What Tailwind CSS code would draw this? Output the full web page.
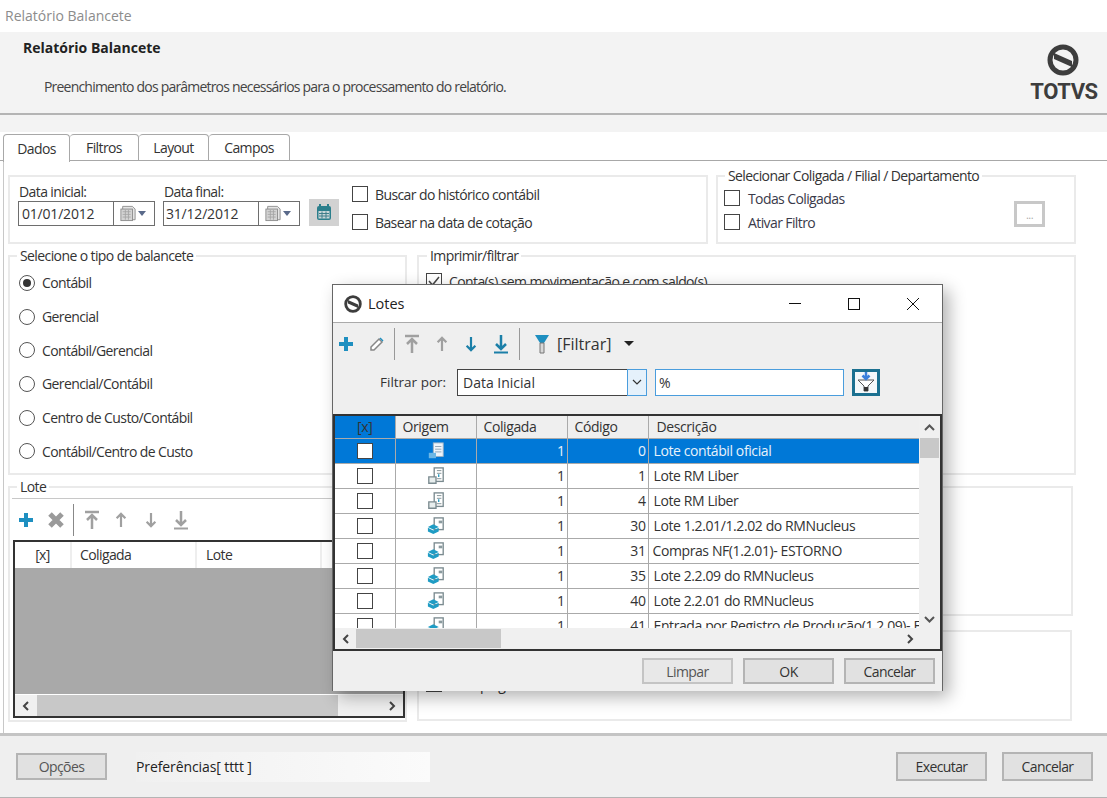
<!DOCTYPE html>
<html lang="pt-BR">
<head>
  <meta charset="UTF-8" />
  <title>Relatório Balancete</title>
  <script src="https://cdn.jsdelivr.net/npm/@tailwindcss/browser@4"></script>
</head>
<body class="relative w-[1107px] h-[798px] overflow-hidden bg-white text-[14px] text-[#333] font-['Open_Sans','Liberation_Sans',sans-serif] tracking-[-0.6px]">

  <!-- icones reutilizados -->
  <svg class="hidden">
    <symbol id="plus" viewBox="0 0 16 16"><path d="M8 1v14M1 8h14" fill="none" stroke="currentColor" stroke-width="4"/></symbol>
    <symbol id="top" viewBox="0 0 16 20"><path d="M1 2h14" stroke="currentColor" stroke-width="2.5"/><path d="M8 19V7M3 10l5-5 5 5" fill="none" stroke="currentColor" stroke-width="2.5"/></symbol>
    <symbol id="up" viewBox="0 0 16 20"><path d="M8 18V4M3 8l5-5 5 5" fill="none" stroke="currentColor" stroke-width="2.5"/></symbol>
    <symbol id="down" viewBox="0 0 16 20"><path d="M8 2v14M3 12l5 5 5-5" fill="none" stroke="currentColor" stroke-width="2.5"/></symbol>
    <symbol id="bottom" viewBox="0 0 16 20"><path d="M1 18.500h14" stroke="currentColor" stroke-width="2"/><path d="M8 1v13M3 10l5 5 5-5" fill="none" stroke="currentColor" stroke-width="2.500"/></symbol>
    <symbol id="logo" viewBox="0 0 32 32"><circle cx="16" cy="16" r="13" fill="none" stroke="currentColor" stroke-width="5"/><path d="M7 9 L25 17 L25 23 L7 15Z" fill="currentColor"/></symbol>
    <symbol id="cal" viewBox="0 0 18 18"><path d="M3 1h11l3 3v12H3z" fill="#e4e4e4" stroke="#8a8a8a"/><rect x="1" y="4" width="13" height="13" fill="#d4d4d4" stroke="#8a8a8a"/><path d="M3 7h9M3 10h9M3 13h9M6 5v11M9.500 5v11" stroke="#a5a5a5"/></symbol>
    <symbol id="doc" viewBox="0 0 20 20"><rect x="8" y="1" width="10" height="15" fill="#fff" stroke="#7b8b90" stroke-width="1.500"/><path d="M2 11h8v7H2z" fill="#e8eeee" stroke="#7b8b90" stroke-width="1.500"/><path d="M11 4h5M11 7h5M11 13h5" stroke="#7b8b90"/><path d="M13 8v3" stroke="#2a9ac0" stroke-width="1.500"/></symbol>
    <symbol id="box" viewBox="0 0 20 20"><rect x="8" y="1" width="10" height="13" fill="#fff" stroke="#7b8b90" stroke-width="1.500"/><path d="M13 4h4v3h-4z" fill="#8a9a9e"/><path d="M1 11l6-3 6 3-6 3z" fill="#1f9cc4"/><path d="M1 12v4l6 3 6-3v-4l-6 3z" fill="#1f9cc4"/></symbol>
  </svg>

  <!-- barra de titulo -->
  <div class="h-8 flex items-center pl-[5px] pb-[1px] text-[#8c8c8c] tracking-normal">Relatório Balancete</div>

  <!-- cabecalho -->
  <header class="h-[100px] bg-[#f3f3f3] relative">
    <div class="h-[83px] border-b-2 border-[#b4b4b4] flex justify-between">
      <div class="pl-[23px] pt-[7px]">
        <p class="font-bold text-[#222] leading-[18px] tracking-normal">Relatório Balancete</p>
        <p class="pl-[21px] pt-[21px] leading-[18px] text-[#444] tracking-[-0.8px]">Preenchimento dos parâmetros necessários para o processamento do relatório.</p>
      </div>
      <div class="w-[66px] mr-[10px] pt-[12px] flex flex-col items-center">
        <svg class="w-8 h-8 -ml-[3px] text-[#3d3d3d]"><use href="#logo"/></svg>
        <span class="mt-[3px] text-[22px] leading-[26px] font-bold text-[#3d3d3d] font-['Roboto',sans-serif] tracking-[-0.4px]">TOTVS</span>
      </div>
    </div>
  </header>

  <!-- abas -->
  <nav class="h-[29px] pt-[2px] pl-[3px] flex border-b border-[#a8a8a8]">
    <a class="w-[67px] h-[28px] -mb-px bg-white border border-b-0 border-[#a8a8a8] rounded-t flex items-center justify-center">Dados</a>
    <a class="w-[69px] h-[27px] border border-l-0 border-[#a8a8a8] rounded-t flex items-center justify-center">Filtros</a>
    <a class="w-[70px] h-[27px] border border-l-0 border-[#a8a8a8] rounded-t flex items-center justify-center">Layout</a>
    <a class="w-[81px] h-[27px] border border-l-0 border-[#a8a8a8] rounded-t flex items-center justify-center">Campos</a>
  </nav>

  <!-- conteudo da aba Dados -->
  <main class="h-[572px] ml-[3px] pl-[4px] pt-[14px] border-l border-[#c8c8c8] flex flex-col gap-[11px]">
    <div class="flex gap-2">
      <section class="w-[700px] h-[69px] border-2 border-[#eaeaea] pl-[8px] flex">
        <div class="w-[145px] pt-[6px]">
          <label class="block pl-px leading-[18px]">Data inicial:</label>
          <div class="w-[137px] h-[25px] border border-[#6e6e6e] flex items-center tracking-[-0.2px]">
            <span class="w-[94px] pl-[3px]">01/01/2012</span>
            <span class="h-full flex-1 border-l border-[#6e6e6e] pr-[3px] flex items-center justify-center gap-[2px]"><svg class="w-[16px] h-[17px]"><use href="#cal"/></svg><span class="border-x-[4px] border-t-[5px] border-x-transparent border-t-[#5a6a8a]"></span></span>
          </div>
        </div>
        <div class="w-[146px] pt-[6px]">
          <label class="block pl-px leading-[18px]">Data final:</label>
          <div class="w-[137px] h-[25px] border border-[#6e6e6e] flex items-center tracking-[-0.2px]">
            <span class="w-[94px] pl-[2px]">31/12/2012</span>
            <span class="h-full flex-1 border-l border-[#6e6e6e] pr-[3px] flex items-center justify-center gap-[2px]"><svg class="w-[16px] h-[17px]"><use href="#cal"/></svg><span class="border-x-[4px] border-t-[5px] border-x-transparent border-t-[#5a6a8a]"></span></span>
          </div>
        </div>
        <button class="w-[30px] h-[27px] mt-[22px] bg-[#d2d2d2] flex items-center justify-center">
          <svg class="w-[16px] h-[17px]" viewBox="0 0 16 17"><rect x="1" y="2" width="14" height="14" rx="2" fill="#2b7f8c"/><rect x="2.500" y="7" width="11" height="7.500" fill="#c9d6d8"/><path d="M4 0v3M12 0v3" stroke="#2b7f8c" stroke-width="2"/><path d="M3 9.500h10M3 12h10M6 7.500v7M10 7.500v7" stroke="#3f7f8a"/></svg>
        </button>
        <div class="pl-[13px] pt-[9px] flex flex-col gap-[12px]">
          <label class="flex items-center gap-[7px] h-[16px]"><span class="w-4 h-4 border border-[#444]"></span>Buscar do histórico contábil</label>
          <label class="flex items-center gap-[7px] h-[16px]"><span class="w-4 h-4 border border-[#444]"></span>Basear na data de cotação</label>
        </div>
      </section>

      <section class="relative w-[360px] h-[69px] border-2 border-[#eaeaea] pl-[6px] pt-[13px]">
        <span class="absolute -top-[10px] left-[7px] px-[3px] bg-white leading-[18px]">Selecionar Coligada / Filial / Departamento</span>
        <div class="flex flex-col gap-[8px]">
          <label class="flex items-center gap-[8px] h-[16px] text-[#3a3a4a]"><span class="w-4 h-4 border border-[#444]"></span>Todas Coligadas</label>
          <label class="flex items-center gap-[8px] h-[16px] text-[#3a3a4a]"><span class="w-4 h-4 border border-[#444]"></span>Ativar Filtro</label>
        </div>
        <button class="absolute left-[296px] top-[24px] w-[31px] h-[26px] border-[3px] border-[#c8c8c8] text-[#aaa] text-[11px] leading-none">...</button>
      </section>
    </div>

    <div class="flex gap-[10px]">
      <section class="relative w-[399px] h-[220px] border-2 border-[#eaeaea] pl-[9px] pt-[9px]">
        <span class="absolute -top-[10px] left-[7px] px-[3px] bg-white leading-[18px]">Selecione o tipo de balancete</span>
        <label class="flex items-center gap-[7px] h-[33.700px]"><span class="w-4 h-4 rounded-full border border-[#555] flex items-center justify-center"><span class="w-2 h-2 rounded-full bg-[#333]"></span></span>Contábil</label>
        <label class="flex items-center gap-[7px] h-[33.700px]"><span class="w-4 h-4 rounded-full border border-[#555]"></span>Gerencial</label>
        <label class="flex items-center gap-[7px] h-[33.700px]"><span class="w-4 h-4 rounded-full border border-[#555]"></span>Contábil/Gerencial</label>
        <label class="flex items-center gap-[7px] h-[33.700px]"><span class="w-4 h-4 rounded-full border border-[#555]"></span>Gerencial/Contábil</label>
        <label class="flex items-center gap-[7px] h-[33.700px]"><span class="w-4 h-4 rounded-full border border-[#555]"></span>Centro de Custo/Contábil</label>
        <label class="flex items-center gap-[7px] h-[33.700px]"><span class="w-4 h-4 rounded-full border border-[#555]"></span>Contábil/Centro de Custo</label>
      </section>
      <section class="relative w-[659px] h-[220px] border-2 border-[#eaeaea] pl-[7px] pt-[16px]">
        <span class="absolute -top-[10px] left-[8px] px-[3px] bg-white leading-[18px]">Imprimir/filtrar</span>
        <label class="flex items-center gap-[7px] h-[16px]">
          <span class="w-4 h-4 border border-[#444] flex items-center justify-center"><svg class="w-3 h-3" viewBox="0 0 12 12"><path d="M1 6l3.500 4L11 2" fill="none" stroke="#444" stroke-width="1.500"/></svg></span>
          Conta(s) sem movimentação e com saldo(s)
        </label>
      </section>
    </div>

    <div class="flex gap-[10px]">
      <section class="relative w-[399px] h-[236px] border-2 border-[#eaeaea] pl-[3px]">
        <span class="absolute -top-[10px] left-[7px] px-[3px] bg-white leading-[18px]">Lote</span>
        <div class="h-[42px] mt-[10px] border-t border-[#c8c8c8] -ml-[1px] mr-[1px] pl-[6px] flex items-center gap-[14px]">
          <svg class="w-4 h-4 text-[#1e8fc0]"><use href="#plus"/></svg>
          <svg class="w-4 h-4" viewBox="0 0 16 16"><path d="M2 2l12 12M14 2L2 14" stroke="#9a9a9a" stroke-width="5"/></svg>
          <span class="h-[32px] border-l border-[#888] -ml-[5px] -mr-[4px]"></span>
          <svg class="w-[16px] h-[20px] text-[#a0a0a0]"><use href="#top"/></svg>
          <svg class="w-[14px] h-[18px] text-[#a0a0a0]"><use href="#up"/></svg>
          <svg class="ml-[2px] w-[14px] h-[18px] text-[#a0a0a0]"><use href="#down"/></svg>
          <svg class="ml-[1px] w-[16px] h-[20px] text-[#a0a0a0]"><use href="#bottom"/></svg>
        </div>
        <div class="w-[392px] h-[178px] border-2 border-[#333] flex flex-col">
          <div class="h-[26px] flex items-center bg-white">
            <span class="w-[57px] text-center border-r-2 border-[#eee] leading-[26px]">[x]</span>
            <span class="w-[125px] pl-2 border-r-2 border-[#eee] leading-[26px]">Coligada</span>
            <span class="w-[125px] pl-[9px] border-r-2 border-[#eee] leading-[26px]">Lote</span>
          </div>
          <div class="flex-1 bg-[#a9a9a9]"></div>
          <div class="h-[22px] border-t border-white bg-[#f0f0f0] flex items-center justify-between px-[6px] relative">
            <svg class="w-[10px] h-[10px]" viewBox="0 0 10 10"><path d="M7 1L3 5l4 4" fill="none" stroke="#444" stroke-width="2"/></svg>
            <span class="absolute left-[22px] top-0 w-[301px] h-full bg-[#c8c8c8]"></span>
            <svg class="w-[10px] h-[10px]" viewBox="0 0 10 10"><path d="M3 1l4 4-4 4" fill="none" stroke="#444" stroke-width="2"/></svg>
          </div>
        </div>
      </section>
      <div class="flex flex-col gap-[14px]">
        <section class="w-[656px] h-[130px] border-2 border-[#eaeaea]"></section>
        <section class="w-[655px] h-[91px] border-2 border-[#eaeaea] pl-[7px] pt-[44px]">
          <label class="flex items-center gap-[7px] h-[16px]"><span class="w-4 h-4 border border-[#444]"></span>Rodapé geral</label>
        </section>
      </div>
    </div>
  </main>

  <!-- rodape -->
  <footer class="h-[65px] border-t-[3px] border-[#c4c4c4] bg-[#efefef] border-b border-b-[#b4b4b4] flex items-center pl-[16px] pr-[14px]">
    <button class="w-[91px] h-[27px] bg-[#e1e1e1] border-2 border-[#b4b4b4] text-[#555]">Opções</button>
    <div class="ml-[29px] w-[294px] h-[30px] flex items-center bg-linear-to-r from-[#f0f0f0] to-[#fbfbfb] text-[#222] tracking-[-0.1px]">Preferências[ tttt ]</div>
    <button class="ml-auto w-[91px] h-[29px] bg-[#e1e1e1] border-2 border-[#b4b4b4]">Executar</button>
    <button class="ml-[15px] w-[91px] h-[29px] bg-[#e1e1e1] border-2 border-[#b4b4b4]">Cancelar</button>
  </footer>

  <!-- janela Lotes -->
  <div class="absolute left-[332px] top-[284px] w-[611px] h-[407px] bg-[#efefef] border border-[#666] border-b-0 shadow-[6px_6px_16px_rgba(0,0,0,0.3)] flex flex-col">
    <div class="h-[38px] shrink-0 bg-white border-b border-[#aaa] flex items-center pl-[11px] text-[#222]">
      <svg class="w-[18px] h-[18px] text-[#3d3d3d] mr-[6px]"><use href="#logo"/></svg>
      <span class="text-[14.500px] tracking-normal">Lotes</span>
      <span class="ml-auto w-[59px] flex justify-center"><span class="w-3 border-t border-[#111]"></span></span>
      <span class="w-[59px] flex justify-center"><span class="w-3 h-3 border border-[#111]"></span></span>
      <span class="w-[59px] flex justify-center"><svg class="w-3 h-3" viewBox="0 0 12 12"><path d="M0 0l12 12M12 0L0 12" stroke="#111"/></svg></span>
    </div>

    <div class="h-[37px] shrink-0 pl-[5px] pt-[4px] flex items-center gap-[15px]">
      <svg class="w-4 h-4 text-[#1e8fc0]"><use href="#plus"/></svg>
      <svg class="w-4 h-4" viewBox="0 0 16 16"><path d="M2 11L10 3l3 3-8 8H2z" fill="#fff" stroke="#888" stroke-width="1.500"/><path d="M10.500 2.500l1-1 3 3-1 1z" fill="#1e8fc0"/></svg>
      <span class="h-[32px] border-l border-[#999] -mx-[6px]"></span>
      <svg class="w-[16px] h-[20px] text-[#a0a0a0]"><use href="#top"/></svg>
      <svg class="w-[14px] h-[18px] text-[#a0a0a0]"><use href="#up"/></svg>
      <svg class="w-[14px] h-[18px] text-[#1b7fa8]"><use href="#down"/></svg>
      <svg class="w-[16px] h-[20px] text-[#1b7fa8]"><use href="#bottom"/></svg>
      <span class="h-[32px] border-l border-[#999] -ml-[5px] -mr-[3px]"></span>
      <svg class="w-[16px] h-[20px] ml-[2px]" viewBox="0 0 16 20"><path d="M1 1h14L10 9v10H6V9z" fill="#1e8fc0"/><path d="M6 9h4v10H6z" fill="#d8d8d8" stroke="#777"/></svg>
      <span class="-ml-[8px] text-[16px] tracking-normal text-[#333]">[Filtrar]</span>
      <span class="-ml-[2px] border-x-[5px] border-t-[5px] border-x-transparent border-t-[#222]"></span>
    </div>

    <div class="h-[26px] mt-[9px] shrink-0 flex items-center">
      <span class="ml-[47px] w-[77px] tracking-normal text-[13.500px]">Filtrar por:</span>
      <div class="w-[190px] h-[27px] flex border border-[#444] bg-white items-center">
        <span class="pl-[5px] flex-1 tracking-normal">Data Inicial</span>
        <span class="w-[20px] h-[27px] -mr-px border border-[#4a9ddd] bg-[#e5f1fb] flex items-center justify-center"><svg class="w-[10px] h-[6px]" viewBox="0 0 10 6"><path d="M1 1l4 4 4-4" fill="none" stroke="#333" stroke-width="1.200"/></svg></span>
      </div>
      <div class="ml-[8px] w-[189px] h-[27px] border border-[#4a9ddd] bg-white flex items-center pl-[3px] tracking-normal">%</div>
      <button class="ml-[8px] w-[28px] h-[27px] border-[3px] border-[#1b7090] bg-[#f4f8fa] flex items-center justify-center">
        <svg class="w-[18px] h-[20px]" viewBox="0 0 18 20"><path d="M1 8h16l-6 6v5H7v-5z" fill="#fff" stroke="#555"/><path d="M9 0v6M5.500 3.500L9 7l3.500-3.500" fill="none" stroke="#3a7fdc" stroke-width="2.500"/><path d="M7 15h4v4H7z" fill="#333"/></svg>
      </button>
    </div>

    <!-- grid -->
    <div class="h-[237px] mt-[19px] border-2 border-[#333] flex flex-col">
      <div class="flex flex-1 min-h-0">
        <div class="flex-1 overflow-hidden">
          <table class="table-fixed w-[586px] border-collapse tracking-[-0.4px]">
            <colgroup><col class="w-[60px]"><col class="w-[81px]"><col class="w-[91px]"><col class="w-[81px]"><col class="w-[273px]"></colgroup>
            <thead>
              <tr class="h-[22px] bg-[#efefef] text-left font-normal">
                <th class="font-normal text-center bg-[#0078d7] border-r border-b border-[#aaa]">[x]</th>
                <th class="font-normal pl-[7px] border-r border-b border-[#aaa]">Origem</th>
                <th class="font-normal pl-[7px] border-r border-b border-[#aaa]">Coligada</th>
                <th class="font-normal pl-[7px] border-r border-b border-[#aaa]">Código</th>
                <th class="font-normal pl-[8px] border-b border-[#aaa]">Descrição</th>
              </tr>
            </thead>
            <tbody class="bg-white">
              <tr class="h-[25px] bg-[#0078d7] text-[#e8f2fb]">
                <td class="border-r border-b border-[#aaa]"><span class="block mx-auto w-4 h-4 bg-white border border-[#444]"></span></td>
                <td class="border-r border-b border-[#aaa]"><svg class="block mx-auto w-[18px] h-[18px]" viewBox="0 0 20 20"><rect x="7" y="1" width="11" height="15" fill="#eef4fa" stroke="#9fb3c4"/><path d="M9 5h7M9 8h7M9 11h7" stroke="#8aa0b3"/><rect x="2" y="12" width="8" height="6" fill="#6db7e6"/></svg></td>
                <td class="text-right pr-[2px] border-r border-b border-[#aaa]">1</td>
                <td class="text-right pr-[2px] border-r border-b border-[#aaa]">0</td>
                <td class="pl-[5px] border-b border-[#aaa]">Lote contábil oficial</td>
              </tr>
              <tr class="h-[25px]">
                <td class="border-r border-b border-[#aaa]"><span class="block mx-auto w-4 h-4 border border-[#444]"></span></td>
                <td class="border-r border-b border-[#aaa]"><svg class="block mx-auto w-[18px] h-[18px]"><use href="#doc"/></svg></td>
                <td class="text-right pr-[2px] border-r border-b border-[#aaa]">1</td>
                <td class="text-right pr-[2px] border-r border-b border-[#aaa]">1</td>
                <td class="pl-[5px] border-b border-[#aaa]">Lote RM Liber</td>
              </tr>
              <tr class="h-[25px]">
                <td class="border-r border-b border-[#aaa]"><span class="block mx-auto w-4 h-4 border border-[#444]"></span></td>
                <td class="border-r border-b border-[#aaa]"><svg class="block mx-auto w-[18px] h-[18px]"><use href="#doc"/></svg></td>
                <td class="text-right pr-[2px] border-r border-b border-[#aaa]">1</td>
                <td class="text-right pr-[2px] border-r border-b border-[#aaa]">4</td>
                <td class="pl-[5px] border-b border-[#aaa]">Lote RM Liber</td>
              </tr>
              <tr class="h-[25px]">
                <td class="border-r border-b border-[#aaa]"><span class="block mx-auto w-4 h-4 border border-[#444]"></span></td>
                <td class="border-r border-b border-[#aaa]"><svg class="block mx-auto w-[18px] h-[18px]"><use href="#box"/></svg></td>
                <td class="text-right pr-[2px] border-r border-b border-[#aaa]">1</td>
                <td class="text-right pr-[2px] border-r border-b border-[#aaa]">30</td>
                <td class="pl-[5px] border-b border-[#aaa]">Lote 1.2.01/1.2.02 do RMNucleus</td>
              </tr>
              <tr class="h-[25px]">
                <td class="border-r border-b border-[#aaa]"><span class="block mx-auto w-4 h-4 border border-[#444]"></span></td>
                <td class="border-r border-b border-[#aaa]"><svg class="block mx-auto w-[18px] h-[18px]"><use href="#box"/></svg></td>
                <td class="text-right pr-[2px] border-r border-b border-[#aaa]">1</td>
                <td class="text-right pr-[2px] border-r border-b border-[#aaa]">31</td>
                <td class="pl-[4px] border-b border-[#aaa]">Compras NF(1.2.01)- ESTORNO</td>
              </tr>
              <tr class="h-[25px]">
                <td class="border-r border-b border-[#aaa]"><span class="block mx-auto w-4 h-4 border border-[#444]"></span></td>
                <td class="border-r border-b border-[#aaa]"><svg class="block mx-auto w-[18px] h-[18px]"><use href="#box"/></svg></td>
                <td class="text-right pr-[2px] border-r border-b border-[#aaa]">1</td>
                <td class="text-right pr-[2px] border-r border-b border-[#aaa]">35</td>
                <td class="pl-[5px] border-b border-[#aaa]">Lote 2.2.09 do RMNucleus</td>
              </tr>
              <tr class="h-[25px]">
                <td class="border-r border-b border-[#aaa]"><span class="block mx-auto w-4 h-4 border border-[#444]"></span></td>
                <td class="border-r border-b border-[#aaa]"><svg class="block mx-auto w-[18px] h-[18px]"><use href="#box"/></svg></td>
                <td class="text-right pr-[2px] border-r border-b border-[#aaa]">1</td>
                <td class="text-right pr-[2px] border-r border-b border-[#aaa]">40</td>
                <td class="pl-[5px] border-b border-[#aaa]">Lote 2.2.01 do RMNucleus</td>
              </tr>
              <tr class="h-[25px]">
                <td class="border-r border-b border-[#aaa]"><span class="block mx-auto w-4 h-4 border border-[#444]"></span></td>
                <td class="border-r border-b border-[#aaa]"><svg class="block mx-auto w-[18px] h-[18px]"><use href="#box"/></svg></td>
                <td class="text-right pr-[2px] border-r border-b border-[#aaa]">1</td>
                <td class="text-right pr-[2px] border-r border-b border-[#aaa]">41</td>
                <td class="pl-[5px] border-b border-[#aaa] whitespace-nowrap overflow-hidden">Entrada por Registro de Produção(1.2.09)- ESTORNO</td>
              </tr>
            </tbody>
          </table>
        </div>
        <!-- scroll vertical -->
        <div class="w-[21px] bg-[#f0f0f0] flex flex-col items-center">
          <svg class="w-[11px] h-[22px]" viewBox="0 0 11 22"><path d="M1 14l4.500-4.500L10 14" fill="none" stroke="#555" stroke-width="2"/></svg>
          <span class="w-[19px] h-[20px] bg-[#c8c8c8]"></span>
          <svg class="mt-auto w-[11px] h-[14px]" viewBox="0 0 11 14"><path d="M1 3l4.500 4.500L10 3" fill="none" stroke="#555" stroke-width="2"/></svg>
        </div>
      </div>
      <!-- scroll horizontal -->
      <div class="h-[21px] shrink-0 bg-[#f0f0f0] flex items-center relative">
        <svg class="ml-[6px] w-[10px] h-[10px]" viewBox="0 0 10 10"><path d="M7 1L3 5l4 4" fill="none" stroke="#444" stroke-width="2"/></svg>
        <span class="ml-[5px] w-[145px] h-[19px] bg-[#c8c8c8]"></span>
        <svg class="absolute right-[25px] w-[10px] h-[10px]" viewBox="0 0 10 10"><path d="M3 1l4 4-4 4" fill="none" stroke="#444" stroke-width="2"/></svg>
      </div>
    </div>

    <div class="flex-1 flex items-center justify-end gap-[10px] pr-[7px]">
      <button class="w-[91px] h-[26px] bg-[#e8e8e8] border-2 border-[#c4c4c4] text-[#555]">Limpar</button>
      <button class="w-[91px] h-[26px] bg-[#e1e1e1] border-2 border-[#b4b4b4]">OK</button>
      <button class="w-[91px] h-[26px] bg-[#e1e1e1] border-2 border-[#b4b4b4]">Cancelar</button>
    </div>
  </div>
</body>
</html>
